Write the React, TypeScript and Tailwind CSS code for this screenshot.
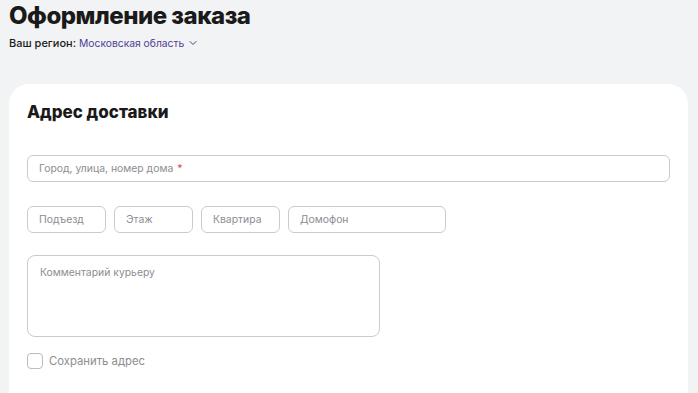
import {ChevronDown} from 'lucide-react';

function Field({label, className = '', required = false}: {label: string; className?: string; required?: boolean}) {
  return (
    <div
      className={`flex h-[27px] items-center rounded-[6px] border border-[#c9cbcf] bg-white pl-[11px] text-[10.4px] text-[#8b8d91] ${className}`}
    >
      <span>{label}</span>
      {required ? <span className="ml-1 text-[#e0424f]">*</span> : null}
    </div>
  );
}

export default function App() {
  return (
    <div
      className="h-[393px] overflow-hidden bg-[#f2f3f5] text-[#1a1a1a]"
      style={{fontFamily: 'Inter, "Noto Sans", sans-serif'}}
    >
      <div className="px-[9px] pt-[1px]">
        <h1 className="text-[24px] font-extrabold leading-[30px] tracking-[-0.5px]">Оформление заказа</h1>
        <div className="mt-[5px] flex items-center text-[11px] leading-[14px]">
          <span className="font-medium">Ваш регион:</span>
          <span className="ml-[3px] text-[10.3px] text-[#4e3f93]">Московская область</span>
          <ChevronDown className="ml-[3px] h-3 w-3 text-[#4e3f93]" strokeWidth={2} />
        </div>
      </div>

      <div className="mx-[9px] mt-[34px] mr-[10px] rounded-t-[20px] bg-white px-[18px] pt-[17px] pb-8">
        <h2 className="text-[17px] font-extrabold leading-[22px]">Адрес доставки</h2>

        <Field label="Город, улица, номер дома" required className="mt-[32px] w-[643px]" />

        <div className="mt-[24px] flex gap-2">
          <Field label="Подъезд" className="w-[79px]" />
          <Field label="Этаж" className="w-[79px]" />
          <Field label="Квартира" className="w-[79px]" />
          <Field label="Домофон" className="w-[158px]" />
        </div>

        <div className="mt-[22px] h-[82px] w-[353px] rounded-[8px] border border-[#c9cbcf] pl-3 pt-[9px] text-[10.4px] text-[#8b8d91]">
          Комментарий курьеру
        </div>

        <label className="mt-[16px] flex items-center gap-[6px] text-[11.3px] text-[#8b8d91]">
          <span className="h-[16px] w-[16px] rounded-[4px] border border-[#b9bbbf] bg-white" />
          Сохранить адрес
        </label>
      </div>
    </div>
  );
}
